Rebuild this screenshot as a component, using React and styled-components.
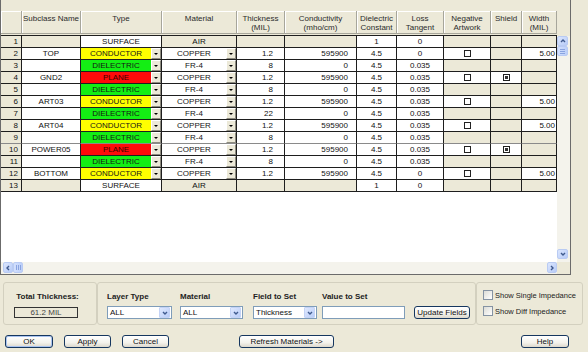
import React from "react";
import styled, { createGlobalStyle } from "styled-components";

const BEIGE = "#ece9d8";
const WHITE = "#ffffff";
const GRID = "#1e1e1e";

const GlobalStyle = createGlobalStyle`
  html, body { margin: 0; padding: 0; background: ${BEIGE}; }
  body { font-family: "Liberation Sans", Arial, sans-serif; color: #111; }
`;

// column widths of the stack-up grid (row number … width)
const COLS = "21px 59px 81px 75px 48px 72px 40px 47px 47px 31px 35px";

const Page = styled.div`
  width: 588px;
  height: 352px;
  background: ${BEIGE};
  display: flex;
  flex-direction: column;
  overflow: hidden;
`;

const Frame = styled.div`
  width: 571px;
  height: 275px;
  box-sizing: border-box;
  border-left: 1px solid #6b6b6b;
  border-right: 1px solid #6b6b6b;
  border-bottom: 1px solid #6b6b6b;
  display: grid;
  grid-template-columns: 556px 13px;
  grid-template-rows: 262px 12px;
  background: ${WHITE};
`;

const TableArea = styled.div`
  display: flex;
  flex-direction: column;
  background: ${WHITE};
  overflow: hidden;
`;

const TopStrip = styled.div`
  height: 11px;
  background: ${BEIGE};
  flex-shrink: 0;
`;

const HeaderRow = styled.div`
  display: grid;
  grid-template-columns: ${COLS};
  height: 24px;
  background: ${BEIGE};
  flex-shrink: 0;
`;

const HeadCell = styled.div`
  box-sizing: border-box;
  height: 23px;
  border-right: 1px solid #a7a69b;
  border-bottom: 1px solid #a7a69b;
  box-shadow: inset 1px 1px 0 #fff;
  font-size: 8px;
  line-height: 9px;
  color: #2b2b2b;
  text-align: center;
  padding-top: 3px;
  white-space: pre-line;
`;

const Body = styled.div`
  border-top: 1px solid ${GRID};
`;

const Row = styled.div`
  display: grid;
  grid-template-columns: ${COLS};
  height: 12px;
  box-shadow: ${(p) => (p.$sep ? "inset 0 1px 0 #9a9a9a" : "none")};
`;

const Cell = styled.div`
  box-sizing: border-box;
  height: 12px;
  border-right: 1px solid ${GRID};
  border-bottom: 1px solid ${(p) => (p.$soft ? "#8a8a8a" : GRID)};
  background: ${(p) => p.$bg || WHITE};
  font-size: 8px;
  line-height: 11px;
  color: #111;
  padding-right: ${(p) => p.$pr || 0}px;
  white-space: nowrap;
  overflow: hidden;
  display: flex;
  align-items: center;
  justify-content: ${(p) =>
    p.$align === "right" ? "flex-end" : p.$align === "left" ? "flex-start" : "center"};
`;

const NumCell = styled(Cell)`
  background: ${BEIGE};
  justify-content: flex-end;
  padding-right: 3px;
`;

const ComboCell = styled.div`
  box-sizing: border-box;
  height: 12px;
  border-right: 1px solid ${GRID};
  border-bottom: 1px solid ${(p) => (p.$soft ? "#8a8a8a" : GRID)};
  display: flex;
`;

const KIND_BG = {
  conductor: "#ffff00",
  dielectric: "#14ee14",
  plane: "#ff0a0a",
};

const ComboText = styled.div`
  flex: 1;
  background: ${(p) => KIND_BG[p.$kind] || WHITE};
  color: ${(p) => (p.$kind === "plane" ? "#3a0000" : "#151515")};
  font-size: 8px;
  line-height: 11px;
  text-align: center;
  white-space: nowrap;
`;

const DropBtn = styled.div`
  width: 10px;
  box-sizing: border-box;
  background: ${BEIGE};
  border-left: 1px solid #fff;
  border-top: 1px solid #fff;
  border-right: 1px solid #8d8b7f;
  border-bottom: 1px solid #8d8b7f;
  display: flex;
  align-items: center;
  justify-content: center;
  &::after {
    content: "";
    border-left: 2px solid transparent;
    border-right: 2px solid transparent;
    border-top: 2px solid #000;
  }
`;

const Check = styled.span`
  width: 7px;
  height: 7px;
  box-sizing: border-box;
  border: 1px solid #222;
  background: #fff;
  display: flex;
  align-items: center;
  justify-content: center;
  &::after {
    content: "";
    display: ${(p) => (p.$on ? "block" : "none")};
    width: 3px;
    height: 3px;
    background: #333;
  }
`;

const ScrollCol = styled.div`
  display: flex;
  flex-direction: column;
  background: ${BEIGE};
`;

const ScrollCap = styled.div`
  height: 36px;
  flex-shrink: 0;
`;

const Track = styled.div`
  flex: 1;
  display: flex;
  flex-direction: ${(p) => (p.$horizontal ? "row" : "column")};
  background: #f4f3ec;
  padding: ${(p) => (p.$horizontal ? "0 0 0 2px" : "0 0 3px 0")};
`;

const Arrow = styled.div`
  width: ${(p) => (p.$horizontal ? 10 : 11)}px;
  height: ${(p) => (p.$horizontal ? 11 : 10)}px;
  box-sizing: border-box;
  border: 1px solid #b9cbf3;
  border-radius: 2px;
  background: linear-gradient(135deg, #dbe6fe, #b7cbf7);
  display: flex;
  align-items: center;
  justify-content: center;
  flex-shrink: 0;
`;

const Thumb = styled(Arrow)`
  background: linear-gradient(90deg, #d3e0fd, #bccff9);
`;

const Spacer = styled.div`
  flex: 1;
`;

const Corner = styled.div`
  background: ${BEIGE};
`;

const Chevron = ({ dir }) => {
  const pts = {
    up: "2,5 4,3 6,5",
    down: "2,3 4,5 6,3",
    left: "5,2 3,4 5,6",
    right: "3,2 5,4 3,6",
  }[dir];
  return (
    <svg width="8" height="8" viewBox="0 0 8 8">
      <polyline points={pts} fill="none" stroke="#3f5a8e" strokeWidth="1.4" />
    </svg>
  );
};

const Grip = ({ vertical }) => (
  <svg width="7" height="7" viewBox="0 0 7 7">
    {vertical
      ? [1.5, 3.5, 5.5].map((y) => <line key={y} x1="1" x2="6" y1={y} y2={y} stroke="#8aa4e0" />)
      : [1.5, 3.5, 5.5].map((x) => <line key={x} y1="1" y2="6" x1={x} x2={x} stroke="#8aa4e0" />)}
  </svg>
);

/* ---------- bottom controls ---------- */

const Controls = styled.div`
  display: flex;
  margin: 7px 0 0 3px;
  height: 43px;
`;

const Group = styled.div`
  width: ${(p) => p.$w}px;
  box-sizing: border-box;
  border: 1px solid #d3d0bf;
  border-radius: 3px;
`;

const TotalGroup = styled(Group)`
  display: flex;
  flex-direction: column;
  align-items: center;
  padding: 9px 5px 0 0;
  gap: 5px;
`;

const Bold = styled.div`
  font-size: 8px;
  font-weight: bold;
  color: #222;
  line-height: 10px;
  white-space: nowrap;
`;

const Readout = styled.div`
  width: 64px;
  height: 11px;
  box-sizing: border-box;
  border: 1px solid #333;
  font-size: 8px;
  line-height: 9px;
  text-align: center;
  color: #444;
  margin-right: 3px;
`;

const FieldGroup = styled(Group)`
  display: grid;
  grid-template-columns: 73px 73px 69px 92px 56px;
  grid-template-rows: 10px 13px;
  row-gap: 4px;
  padding: 9px 0 0 9px;
  align-items: end;
`;

const Select = styled.div`
  width: ${(p) => p.$w}px;
  height: 13px;
  box-sizing: border-box;
  border: 1px solid #7f9db9;
  background: #fff;
  display: flex;
  align-items: center;
  font-size: 8px;
  color: #111;
  padding: 0 1px 0 2px;
`;

const SelectBtn = styled.span`
  margin-left: auto;
  width: 11px;
  height: 11px;
  box-sizing: border-box;
  border: 1px solid #c4d3f6;
  border-radius: 1px;
  background: linear-gradient(135deg, #e0e9fe, #b9cdf8);
  display: flex;
  align-items: center;
  justify-content: center;
`;

const TextBox = styled.div`
  width: 83px;
  height: 13px;
  box-sizing: border-box;
  border: 1px solid #7f9db9;
  background: #fff;
`;

const Button = styled.div`
  width: ${(p) => p.$w}px;
  height: 13px;
  box-sizing: border-box;
  border: 1px solid #16375f;
  border-radius: 3px;
  background: linear-gradient(#ffffff, #f3f2ec 60%, #dcd8cc);
  box-shadow: ${(p) => (p.$focus ? "inset 0 0 0 1px #a9c3ef" : "none")};
  font-size: 8px;
  line-height: 11px;
  text-align: center;
  color: #111;
  white-space: nowrap;
`;

const ImpedanceGroup = styled(Group)`
  display: flex;
  flex-direction: column;
  gap: 6px;
  padding: 7px 0 0 6px;
`;

const CheckLine = styled.div`
  display: flex;
  align-items: center;
  gap: 2px;
  font-size: 7.5px;
  color: #222;
  white-space: nowrap;
`;

const Box = styled.span`
  width: 10px;
  height: 10px;
  box-sizing: border-box;
  border: 1px solid #8593a3;
  background: linear-gradient(135deg, #dcdcd6, #fff);
`;

const ButtonBar = styled.div`
  display: flex;
  align-items: center;
  margin-top: 10px;
  padding: 0 19px 0 5px;
  gap: 11px;
`;

const Push = styled.div`
  margin-left: ${(p) => p.$ml || "auto"};
`;

const HEADERS = [
  "",
  "Subclass Name",
  "Type",
  "Material",
  "Thickness\n(MIL)",
  "Conductivity\n(mho/cm)",
  "Dielectric\nConstant",
  "Loss\nTangent",
  "Negative\nArtwork",
  "Shield",
  "Width\n(MIL)",
];

const LAYERS = [
  { n: 1, kind: "surface" },
  { n: 2, name: "TOP", kind: "conductor", loss: "0" },
  { n: 3, kind: "dielectric", thick: "8" },
  { n: 4, name: "GND2", kind: "plane" },
  { n: 5, kind: "dielectric", thick: "8" },
  { n: 6, name: "ART03", kind: "conductor" },
  { n: 7, kind: "dielectric", thick: "22" },
  { n: 8, name: "ART04", kind: "conductor" },
  { n: 9, kind: "dielectric", thick: "8", soft: true },
  { n: 10, name: "POWER05", kind: "plane", sep: true },
  { n: 11, kind: "dielectric", thick: "8" },
  { n: 12, name: "BOTTOM", kind: "conductor", loss: "0" },
  { n: 13, kind: "surface" },
];

function LayerRow({ r }) {
  const surface = r.kind === "surface";
  const metal = r.kind === "conductor" || r.kind === "plane";
  const s = r.soft;
  return (
    <Row $sep={r.sep}>
      <NumCell $soft={s}>{r.n}</NumCell>
      <Cell $soft={s} $bg={surface ? BEIGE : WHITE}>{r.name}</Cell>
      {surface ? (
        <Cell $soft={s}>SURFACE</Cell>
      ) : (
        <ComboCell $soft={s}>
          <ComboText $kind={r.kind}>{r.kind.toUpperCase()}</ComboText>
          <DropBtn />
        </ComboCell>
      )}
      {surface ? (
        <Cell $soft={s} $bg={BEIGE}>AIR</Cell>
      ) : (
        <ComboCell $soft={s}>
          <ComboText>{metal ? "COPPER" : "FR-4"}</ComboText>
          <DropBtn />
        </ComboCell>
      )}
      <Cell $soft={s} $align="right" $pr={11} $bg={surface ? BEIGE : WHITE}>
        {surface ? "" : metal ? "1.2" : r.thick}
      </Cell>
      <Cell $soft={s} $align="right" $pr={8} $bg={surface ? BEIGE : WHITE}>
        {surface ? "" : metal ? "595900" : "0"}
      </Cell>
      <Cell $soft={s}>{surface ? "1" : "4.5"}</Cell>
      <Cell $soft={s}>{surface ? "0" : r.loss || "0.035"}</Cell>
      <Cell $soft={s} $bg={metal ? WHITE : BEIGE}>{metal && <Check />}</Cell>
      <Cell $soft={s} $bg={r.kind === "plane" ? WHITE : BEIGE}>
        {r.kind === "plane" && <Check $on />}
      </Cell>
      <Cell $soft={s} $align="right" $pr={1} $bg={r.kind === "conductor" ? WHITE : BEIGE}>
        {r.kind === "conductor" ? "5.00" : ""}
      </Cell>
    </Row>
  );
}

export default function App() {
  return (
    <Page>
      <GlobalStyle />
      <Frame>
        <TableArea>
          <TopStrip />
          <HeaderRow>
            {HEADERS.map((h, i) => (
              <HeadCell key={i}>{h}</HeadCell>
            ))}
          </HeaderRow>
          <Body>
            {LAYERS.map((r) => (
              <LayerRow key={r.n} r={r} />
            ))}
          </Body>
        </TableArea>
        <ScrollCol>
          <ScrollCap />
          <Track>
            <Arrow>
              <Chevron dir="up" />
            </Arrow>
            <Thumb>
              <Grip vertical />
            </Thumb>
            <Spacer />
            <Arrow>
              <Chevron dir="down" />
            </Arrow>
          </Track>
        </ScrollCol>
        <Track $horizontal>
          <Arrow $horizontal>
            <Chevron dir="left" />
          </Arrow>
          <Thumb $horizontal>
            <Grip />
          </Thumb>
          <Spacer />
          <Arrow $horizontal>
            <Chevron dir="right" />
          </Arrow>
        </Track>
        <Corner />
      </Frame>

      <Controls>
        <TotalGroup $w={94}>
          <Bold>Total Thickness:</Bold>
          <Readout>61.2 MIL</Readout>
        </TotalGroup>
        <FieldGroup $w={379}>
          <Bold>Layer Type</Bold>
          <Bold>Material</Bold>
          <Bold>Field to Set</Bold>
          <Bold>Value to Set</Bold>
          <span />
          <Select $w={65}>
            ALL
            <SelectBtn>
              <Chevron dir="down" />
            </SelectBtn>
          </Select>
          <Select $w={63}>
            ALL
            <SelectBtn>
              <Chevron dir="down" />
            </SelectBtn>
          </Select>
          <Select $w={64}>
            Thickness
            <SelectBtn>
              <Chevron dir="down" />
            </SelectBtn>
          </Select>
          <TextBox />
          <Button $w={56}>Update Fields</Button>
        </FieldGroup>
        <ImpedanceGroup $w={107}>
          <CheckLine>
            <Box />
            Show Single Impedance
          </CheckLine>
          <CheckLine>
            <Box />
            Show Diff Impedance
          </CheckLine>
        </ImpedanceGroup>
      </Controls>

      <ButtonBar>
        <Button $w={48} $focus>OK</Button>
        <Button $w={47}>Apply</Button>
        <Button $w={47}>Cancel</Button>
        <Push $ml="59px">
          <Button $w={95}>Refresh Materials -&gt;</Button>
        </Push>
        <Push>
          <Button $w={48}>Help</Button>
        </Push>
      </ButtonBar>
    </Page>
  );
}
